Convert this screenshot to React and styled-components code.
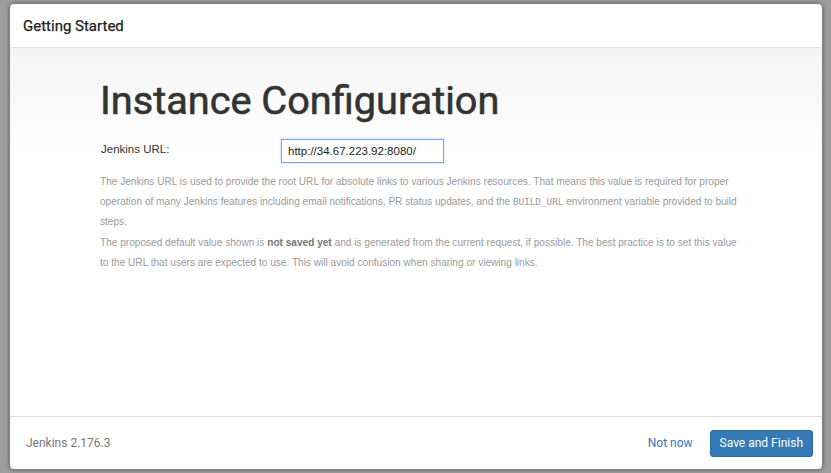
import React from "react";
import styled, { createGlobalStyle } from "styled-components";

const Global = createGlobalStyle`
  html, body { margin: 0; padding: 0; }
  body {
    background: #9d9d9d;
    font-family: "Liberation Sans", Arial, sans-serif;
  }
`;

const Backdrop = styled.div`
  width: 831px;
  height: 473px;
  box-sizing: border-box;
  padding: 4px 9px 4px 10px;
`;

const Modal = styled.div`
  height: 100%;
  display: flex;
  flex-direction: column;
  background: #fff;
  border-radius: 4px;
  box-shadow: 0 0 4px 1px rgba(0, 0, 0, 0.35);
  overflow: hidden;
`;

const Header = styled.div`
  height: 43px;
  flex: none;
  display: flex;
  align-items: center;
  padding: 0 13px;
  border-bottom: 1px solid #e3e3e3;
  font-family: Roboto, "Liberation Sans", sans-serif;
  font-weight: 400;
  font-size: 15px;
  color: #222;
  -webkit-text-stroke: 0.25px #222;
`;

const Body = styled.div`
  flex: 1;
  padding: 25px 90px 0 90px;
  background: linear-gradient(to bottom, #f4f4f4 0px, #fafafa 60px, #ffffff 110px);
  border-bottom: 1px solid #dcdcdc;
`;

const Title = styled.h1`
  margin: 0 0 10px 0;
  font-family: Roboto, "Liberation Sans", sans-serif;
  font-weight: 400;
  font-size: 39.7px;
  line-height: 56px;
  color: #333;
  -webkit-text-stroke: 0.6px #333;
`;

const FieldRow = styled.div`
  display: grid;
  grid-template-columns: 180px 163px;
  align-items: center;
  padding-left: 1px;
`;

const Label = styled.label`
  font-size: 11.5px;
  color: #333;
  align-self: start;
  padding-top: 4px;
`;

const Input = styled.input`
  box-sizing: border-box;
  width: 163px;
  height: 24px;
  padding: 0 6px;
  border: 1px solid #7aa7e8;
  box-shadow: 0 0 2px rgba(102, 150, 233, 0.6);
  font-family: "Liberation Sans", Arial, sans-serif;
  font-size: 11.5px;
  color: #222;
  outline: none;
`;

const Help = styled.div`
  margin-top: 9px;
  font-size: 10.1px;
  line-height: 20.2px;
  color: #9a9a9a;
  b { color: #777; }
  code {
    font-family: "DejaVu Sans Mono", "Liberation Mono", monospace;
    font-size: 9.3px;
    color: #999;
  }
`;

const Para = styled.p`
  margin: 0;
  width: ${props => props.w}px;
`;

const Footer = styled.div`
  height: 52px;
  flex: none;
  display: flex;
  align-items: center;
  padding: 0 9px 0 16px;
  font-family: Roboto, "Liberation Sans", sans-serif;
`;

const Version = styled.span`
  flex: 1;
  font-size: 12px;
  color: #777;
`;

const LinkButton = styled.a`
  font-size: 12px;
  color: #337ab7;
  margin-right: 17px;
  cursor: pointer;
`;

const PrimaryButton = styled.button`
  height: 27px;
  padding: 0 9px;
  border: 1px solid #2e6da4;
  border-radius: 3px;
  background: #337ab7;
  color: #fff;
  font-family: Roboto, "Liberation Sans", sans-serif;
  font-size: 12px;
`;

export default function App() {
  return (
    <>
      <Global />
      <Backdrop>
        <Modal>
          <Header>Getting Started</Header>
          <Body>
            <Title>Instance Configuration</Title>
            <FieldRow>
              <Label>Jenkins URL:</Label>
              <Input defaultValue="http://34.67.223.92:8080/" />
            </FieldRow>
            <Help>
              <Para w={650}>
                The Jenkins URL is used to provide the root URL for absolute links to various Jenkins resources. That means this value is required for proper operation of many Jenkins features including email notifications, PR status updates, and the <code>BUILD_URL</code> environment variable provided to build steps.
              </Para>
              <Para w={642}>
                The proposed default value shown is <b>not saved yet</b> and is generated from the current request, if possible. The best practice is to set this value to the URL that users are expected to use. This will avoid confusion when sharing or viewing links.
              </Para>
            </Help>
          </Body>
          <Footer>
            <Version>Jenkins 2.176.3</Version>
            <LinkButton>Not now</LinkButton>
            <PrimaryButton>Save and Finish</PrimaryButton>
          </Footer>
        </Modal>
      </Backdrop>
    </>
  );
}
